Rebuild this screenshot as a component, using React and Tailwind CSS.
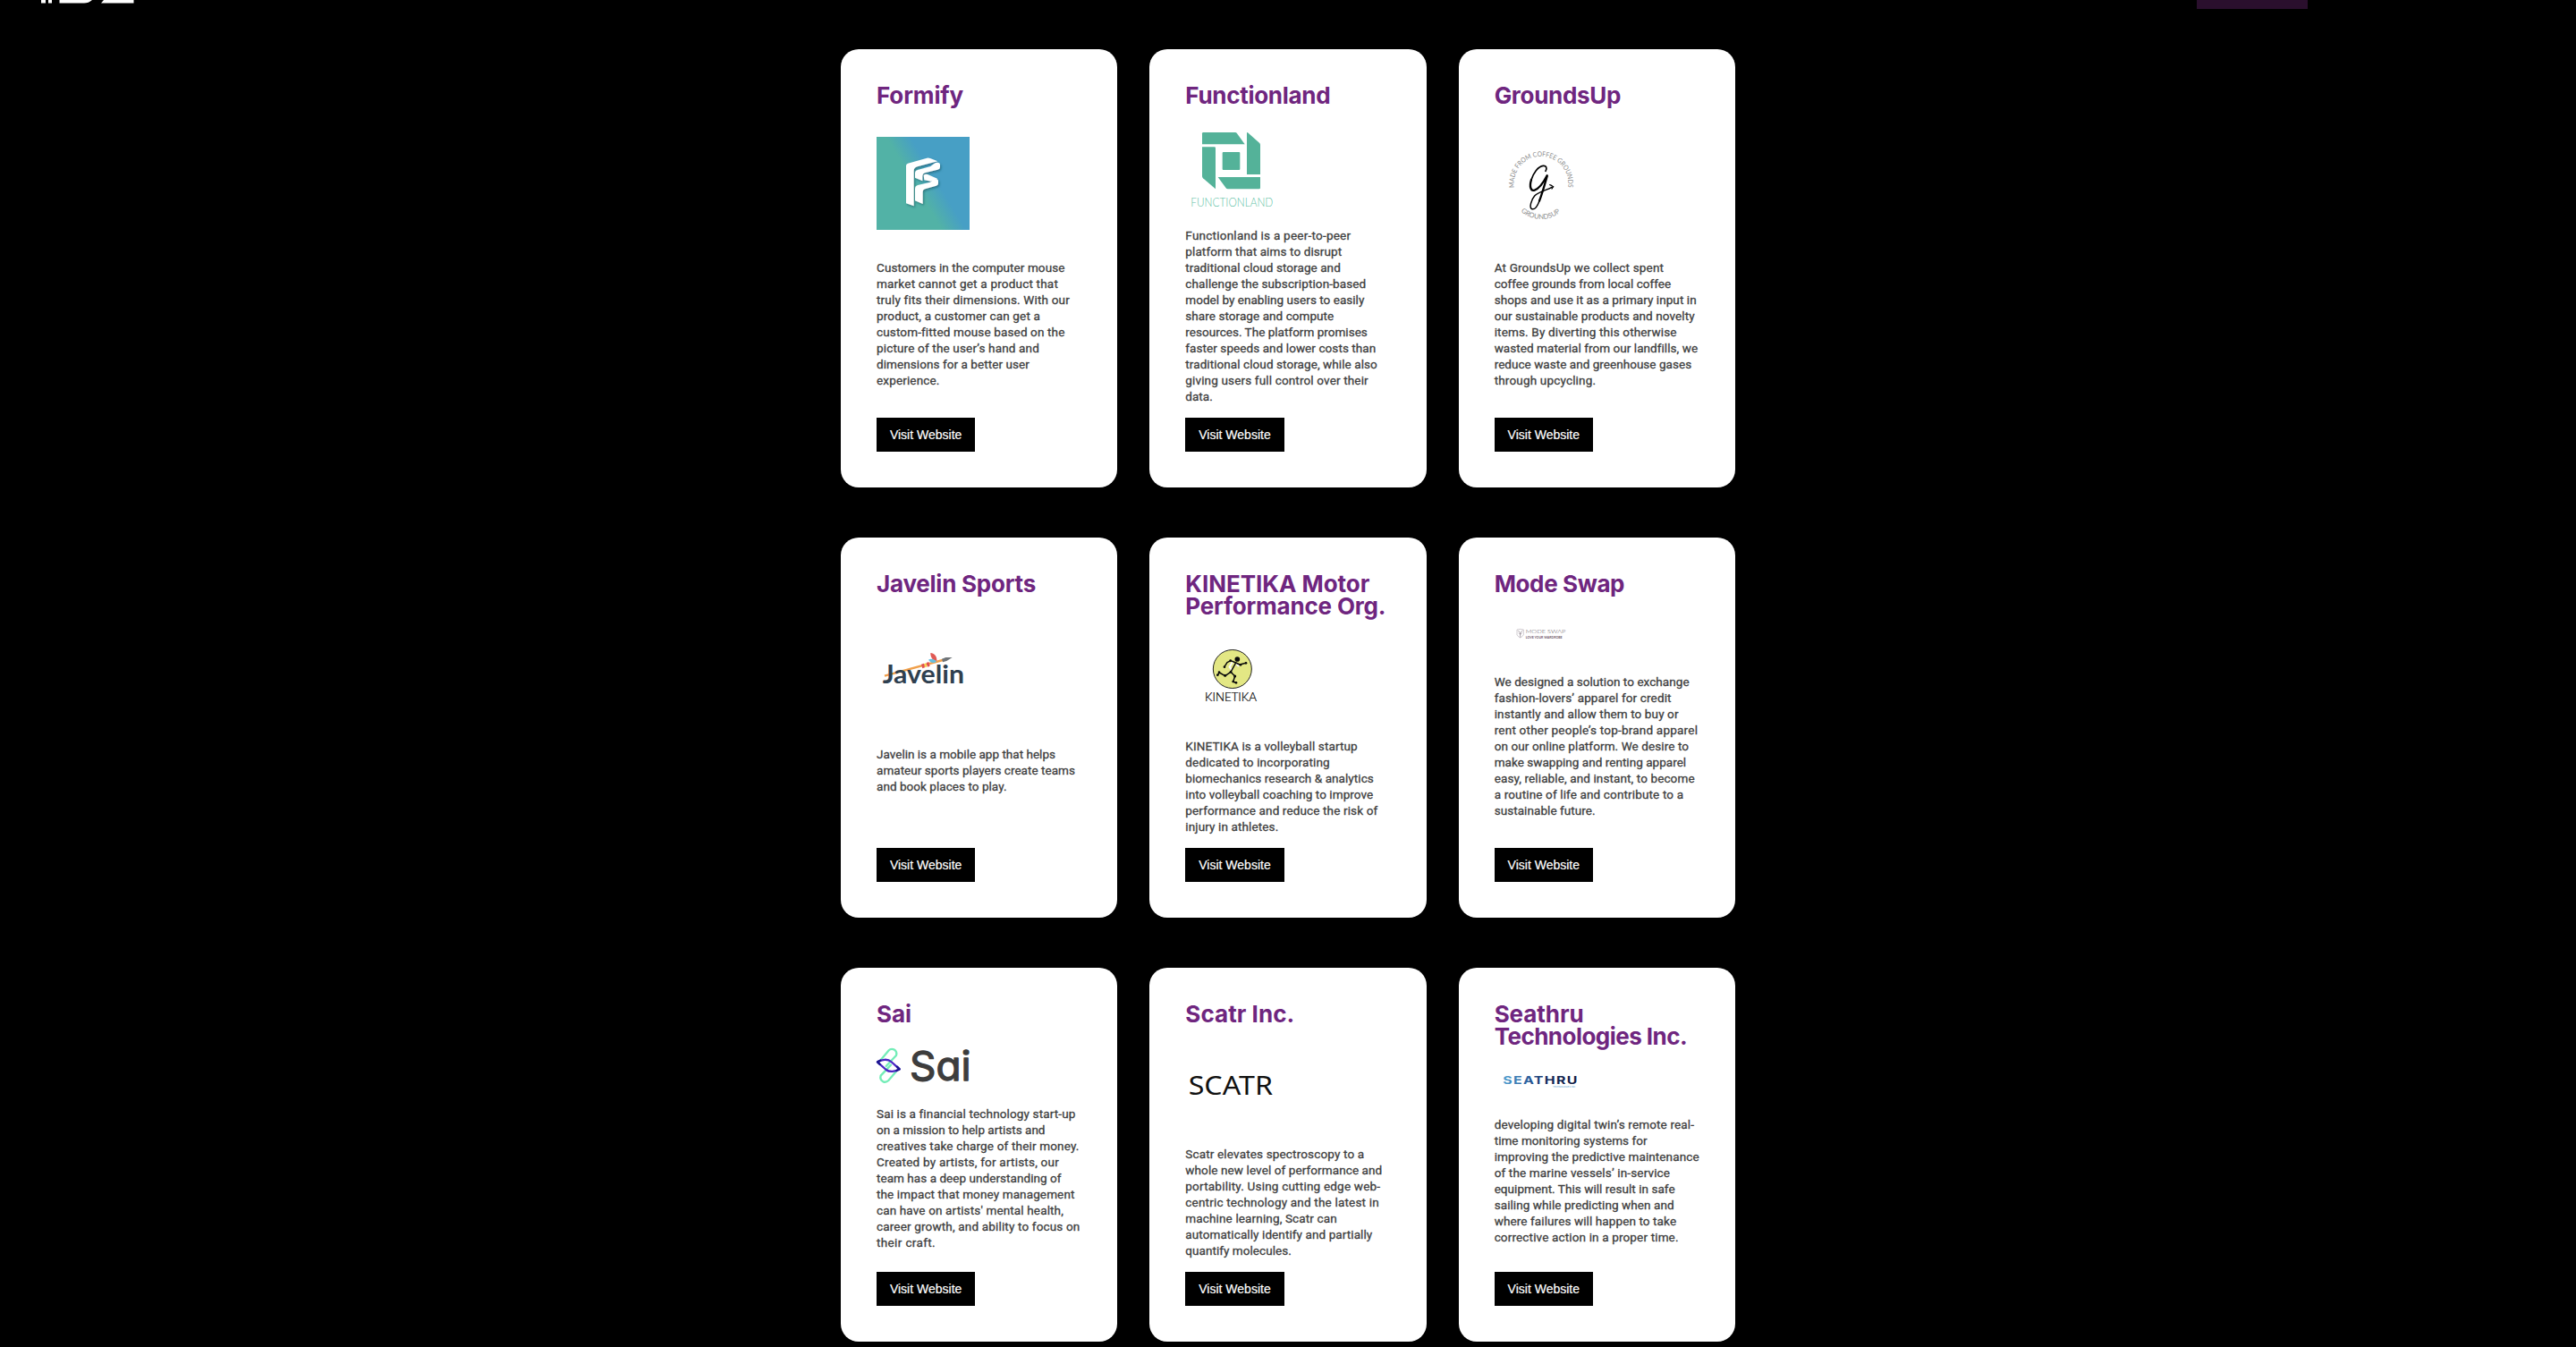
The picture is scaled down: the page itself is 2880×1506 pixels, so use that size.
import { useLayoutEffect, useRef } from "react";

/* One line of copy, tracked so that it fills the given width. */
function Line({ text, width }) {
  const ref = useRef(null);
  useLayoutEffect(() => {
    const el = ref.current;
    el.style.letterSpacing = "0px";
    const natural = el.getBoundingClientRect().width;
    el.style.letterSpacing = `${(width - natural) / text.length}px`;
  }, [text, width]);
  return (
    <span className="block">
      <span ref={ref} className="inline-block whitespace-nowrap">
        {text}
      </span>
    </span>
  );
}

function FormifyLogo() {
  return (
    <svg className="h-[171px] w-[104px]" viewBox="150 240 312 513">
      <defs>
        <linearGradient id="formify" gradientUnits="userSpaceOnUse" x1="286" y1="512" x2="346" y2="476">
          <stop offset="0" stopColor="#52b2a6" />
          <stop offset="1" stopColor="#479fc5" />
        </linearGradient>
        <filter id="formify-shadow" x="-20%" y="-20%" width="150%" height="150%">
          <feDropShadow dx="4" dy="5" stdDeviation="3" floodColor="#14505c" floodOpacity="0.55" />
        </filter>
      </defs>
      <rect x="150" y="339" width="312" height="312" fill="url(#formify)" />
      <g fill="#fff" filter="url(#formify-shadow)">
        <path d="M249 436q0-6 6-8l64-18q6-1 11 1l25 10-68 18q-12 3-12 14v118l-26-9z" />
        <path d="M279 459q1-7 9-9l43-12q9-7 17-12 15-3 15 7v7q0 7-8 9l-43 11q-8 2-8 10v17l-25-11z" />
        <path d="M308 467q6-4 13-2l33 14-22 9-22-4z" />
        <path d="M279 514q0-10 9-13l42-10q10-10 19-11 8 0 8 8v7q0 6-7 8l-37 11q-8 2-8 11v39l-26-11z" />
      </g>
    </svg>
  );
}

function FunctionlandLogo() {
  return (
    <svg className="h-[135px] w-[104px]" viewBox="150 240 312 405">
      <g fill="#54b299">
        <path d="M211 324h107q3 0 5 2l27 38H207v-36q0-4 4-4z" />
        <path d="M357 326q0-3 3-1l39 34q3 3 3 7v99h-45z" />
        <path d="M207 373h41q4 0 4 4v137l-42-36q-3-3-3-7z" />
        <path d="M260 474h142v36q0 4-4 4H293q-4 0-6-3z" />
        <rect x="275" y="390" width="59" height="60" rx="3" />
      </g>
      <text x="169" y="573" textLength="276" lengthAdjust="spacingAndGlyphs" fontSize="38" fontWeight="300" fontFamily="Lato, sans-serif" fill="#62bfa6">
        FUNCTIONLAND
      </text>
    </svg>
  );
}

function GroundsUpLogo() {
  return (
    <svg className="h-[171px] w-[104px] overflow-visible" viewBox="153 240 312 513">
      <defs>
        <path id="cup-top" d="M219 509A91 91 0 1 1 399 509" />
        <path id="cup-bottom" d="M241 589A102 102 0 0 0 377 589" />
      </defs>
      <g fill="#8d8d8d" fontFamily="Lato, sans-serif" fontSize="23">
        <text>
          <textPath href="#cup-top" textLength="312" lengthAdjust="spacingAndGlyphs">
            MADE FROM COFFEE GROUNDS
          </textPath>
        </text>
        <text>
          <textPath href="#cup-bottom" textLength="144" lengthAdjust="spacingAndGlyphs">
            GROUNDSUP
          </textPath>
        </text>
      </g>
      <g fill="none" stroke="#000" strokeLinecap="round" strokeLinejoin="round">
        <path strokeWidth="5" d="M324 454c6-11 2-19-8-18-18 2-33 25-40 47" />
        <path strokeWidth="7" d="M276 483c-7 23-2 39 11 35 15-5 29-24 42-49" />
        <path strokeWidth="7" d="M329 471c-8 28-17 60-26 83" />
        <path strokeWidth="4.5" d="M303 554c-7 19-16 30-25 27-10-5-2-31 9-44 13-14 40-19 58-29" />
        <path strokeWidth="4" d="M338 500c6 1 8 4 12 6-2 2-3 4-5 7" />
      </g>
    </svg>
  );
}

function JavelinLogo() {
  return (
    <svg className="h-[169px] w-[104px]" viewBox="150 228 312 507">
      <path d="M177 497L372 444" stroke="#f0a04b" strokeWidth="7" />
      <path d="M300 458l9-3 3 14-8 3zM317 453l8-3 4 14-8 3z" fill="#e0524f" />
      <path d="M310 456l6-2 3 13-6 2z" fill="#f7d154" />
      <path d="M331 420c12 1 22 10 21 27-12 0-22-12-21-27z" fill="#e05a55" />
      <path d="M324 443c9-5 20-2 27 6-9 6-19 5-27-6z" fill="#66bfe0" />
      <path d="M369 440l13-5 22 0-19 12-13 4z" fill="#6f7478" />
      <text x="170" y="522" textLength="274" lengthAdjust="spacingAndGlyphs" fontSize="88" fontWeight="700" fontFamily="Lato, sans-serif" fill="#2f4050">
        Javelin
      </text>
    </svg>
  );
}

function KinetikaLogo() {
  return (
    <svg className="h-[135px] w-[104px]" viewBox="150 303 312 405">
      <circle cx="308.5" cy="474" r="64.5" fill="#e3e784" stroke="#222" strokeWidth="3" />
      <path d="M309 451l-10 16 9 12M322 456l8 9" stroke="#fff" strokeWidth="6" fill="none" />
      <g fill="none" stroke="#0a0a0a" strokeWidth="4.5" strokeLinejoin="round" strokeLinecap="round">
        <path d="M282 466l9-14 12-6 17 7 13 6 21-5" />
        <path d="M320 453l-17 31-19 13-19-11-6 8" />
        <path d="M303 484l14 14-6 19 10 3" />
      </g>
      <g fill="#0a0a0a">
        <circle cx="325" cy="441" r="8.5" />
        <circle cx="282" cy="467" r="4" />
        <circle cx="302" cy="446" r="4" />
        <circle cx="336" cy="460" r="4" />
        <circle cx="354" cy="454" r="4" />
        <circle cx="303" cy="484" r="4" />
        <circle cx="284" cy="496" r="4.5" />
        <circle cx="264" cy="485" r="4" />
        <circle cx="259" cy="494" r="4" />
        <circle cx="317" cy="498" r="4.5" />
        <circle cx="311" cy="516" r="4" />
        <circle cx="321" cy="520" r="4" />
      </g>
      <text x="216" y="583" textLength="174" lengthAdjust="spacingAndGlyphs" fontSize="39" fontWeight="300" fontFamily="Lato, sans-serif" fill="#000" stroke="#000" strokeWidth="0.7">
        KINETIKA
      </text>
    </svg>
  );
}

function ModeSwapLogo() {
  return (
    <svg className="h-[88px] w-[104px]" viewBox="153 228 312 264">
      <g fill="none" stroke="#8b7f8a" strokeWidth="2">
        <path d="M228 342q11-4 22 0v17q-3 6-11 10-8-4-11-10z" opacity="0.6" />
        <path d="M239 368v-16M232 345l7 8 8-8M234 353l5 5 5-5" />
      </g>
      <text x="257" y="354" textLength="134" lengthAdjust="spacingAndGlyphs" fontSize="20" fontWeight="300" fontFamily="Lato, sans-serif" fill="#5c545c">
        MODE SWAP
      </text>
      <text x="257" y="371" textLength="123" lengthAdjust="spacingAndGlyphs" fontSize="11" fontWeight="700" fontFamily="Lato, sans-serif" fill="#6d5468">
        LOVE YOUR WARDROBE
      </text>
    </svg>
  );
}

function SaiLogo() {
  return (
    <svg className="h-[90px] w-[104px] overflow-visible" viewBox="150 231 312 270" aria-label="Sai">
      <g fill="none" strokeLinecap="round" strokeLinejoin="round">
        <path d="M165 344l25-30q8-8 18-4 12 7 8 20l-34 36" stroke="#74edb8" strokeWidth="7" />
        <path d="M215 385l-25 29q-8 8-18 4-12-7-8-20l34-36" stroke="#74edb8" strokeWidth="7" />
        <path d="M153 352c14-9 35-11 46-1l28 25c-14 9-34 11-45 2z" stroke="#4a26c4" strokeWidth="7" />
        <path d="M153 352l10-5M153 352l8 8M227 376l-10 5M227 376l-8-8" stroke="#1c1590" strokeWidth="7" />
      </g>
      <text
        x="261"
        y="414"
        textLength="206"
        lengthAdjust="spacingAndGlyphs"
        fontSize="134"
        fontFamily="Inter, sans-serif"
        fill="#3d3d3d"
        stroke="#3d3d3d"
        strokeWidth="4"
        strokeLinejoin="round"
      >
        Sɑi
      </text>
    </svg>
  );
}

function ScatrLogo() {
  return (
    <svg className="h-[135px] w-[104px]" viewBox="150 231 312 405">
      <text x="161" y="463" textLength="283" lengthAdjust="spacingAndGlyphs" fontSize="87" fontFamily="'Noto Sans', sans-serif" fill="#111">
        SCATR
      </text>
    </svg>
  );
}

function SeathruLogo() {
  return (
    <svg className="h-[77px] w-[104px]" viewBox="153 306 312 231">
      <defs>
        <linearGradient id="seathru" gradientUnits="userSpaceOnUse" x1="182" y1="0" x2="430" y2="0">
          <stop offset="0" stopColor="#4f9fd0" />
          <stop offset="0.35" stopColor="#2a5c9a" />
          <stop offset="0.6" stopColor="#152b5c" />
          <stop offset="1" stopColor="#101c42" />
        </linearGradient>
      </defs>
      <text x="181" y="426" textLength="253" lengthAdjust="spacingAndGlyphs" letterSpacing="3" fontSize="36" fontWeight="700" fontFamily="Inter, sans-serif" fill="url(#seathru)">
        SEATHRU
      </text>
      <text x="348" y="437" textLength="78" lengthAdjust="spacingAndGlyphs" fontSize="8" fontFamily="Inter, sans-serif" fill="#5ba3d0">
        TECHNOLOGIES INC.
      </text>
    </svg>
  );
}

const startups = [
  {
    logo: FormifyLogo,
    title: [["Formify", 97]],
    body: [
      ["Customers in the computer mouse", 210.5],
      ["market cannot get a product that", 203],
      ["truly fits their dimensions. With our", 215.5],
      ["product, a customer can get a", 183],
      ["custom-fitted mouse based on the", 210],
      ["picture of the user’s hand and", 182],
      ["dimensions for a better user", 171],
      ["experience.", 70.5],
    ],
  },
  {
    logo: FunctionlandLogo,
    title: [["Functionland", 162]],
    body: [
      ["Functionland is a peer-to-peer", 185],
      ["platform that aims to disrupt", 175],
      ["traditional cloud storage and", 173.5],
      ["challenge the subscription-based", 202],
      ["model by enabling users to easily", 200],
      ["share storage and compute", 166],
      ["resources. The platform promises", 203.5],
      ["faster speeds and lower costs than", 213],
      ["traditional cloud storage, while also", 214.5],
      ["giving users full control over their", 204.5],
      ["data.", 30.5],
    ],
  },
  {
    logo: GroundsUpLogo,
    title: [["GroundsUp", 141.5]],
    body: [
      ["At GroundsUp we collect spent", 189.5],
      ["coffee grounds from local coffee", 197.5],
      ["shops and use it as a primary input in", 226],
      ["our sustainable products and novelty", 224],
      ["items. By diverting this otherwise", 204],
      ["wasted material from our landfills, we", 227],
      ["reduce waste and greenhouse gases", 220.5],
      ["through upcycling.", 113.5],
    ],
  },
  {
    logo: JavelinLogo,
    title: [["Javelin Sports", 178]],
    body: [
      ["Javelin is a mobile app that helps", 200],
      ["amateur sports players create teams", 222],
      ["and book places to play.", 145.5],
    ],
  },
  {
    logo: KinetikaLogo,
    title: [
      ["KINETIKA Motor", 206],
      ["Performance Org.", 224],
    ],
    body: [
      ["KINETIKA is a volleyball startup", 192.5],
      ["dedicated to incorporating", 161.5],
      ["biomechanics research & analytics", 210.5],
      ["into volleyball coaching to improve", 210],
      ["performance and reduce the risk of", 215],
      ["injury in athletes.", 104],
    ],
  },
  {
    logo: ModeSwapLogo,
    title: [["Mode Swap", 145.5]],
    body: [
      ["We designed a solution to exchange", 218],
      ["fashion-lovers’ apparel for credit", 198],
      ["instantly and allow them to buy or", 206],
      ["rent other people’s top-brand apparel", 227.5],
      ["on our online platform. We desire to", 217.5],
      ["make swapping and renting apparel", 214.5],
      ["easy, reliable, and instant, to become", 224],
      ["a routine of life and contribute to a", 211.5],
      ["sustainable future.", 113],
    ],
  },
  {
    logo: SaiLogo,
    title: [["Sai", 39]],
    body: [
      ["Sai is a financial technology start-up", 222],
      ["on a mission to help artists and", 188.5],
      ["creatives take charge of their money.", 226.5],
      ["Created by artists, for artists, our", 204],
      ["team has a deep understanding of", 206.5],
      ["the impact that money management", 221.5],
      ["can have on artists' mental health,", 209],
      ["career growth, and ability to focus on", 227.5],
      ["their craft.", 66],
    ],
  },
  {
    logo: ScatrLogo,
    title: [["Scatr Inc.", 122]],
    body: [
      ["Scatr elevates spectroscopy to a", 200],
      ["whole new level of performance and", 220],
      ["portability. Using cutting edge web-", 218],
      ["centric technology and the latest in", 216.5],
      ["machine learning, Scatr can", 169.5],
      ["automatically identify and partially", 209],
      ["quantify molecules.", 118.5],
    ],
  },
  {
    logo: SeathruLogo,
    title: [
      ["Seathru", 100],
      ["Technologies Inc.", 215.5],
    ],
    body: [
      ["developing digital twin’s remote real-", 223.5],
      ["time monitoring systems for", 171],
      ["improving the predictive maintenance", 229],
      ["of the marine vessels’ in-service", 196.5],
      ["equipment. This will result in safe", 202],
      ["sailing while predicting when and", 201],
      ["where failures will happen to take", 203.5],
      ["corrective action in a proper time.", 206],
    ],
  },
];

function Card({ logo: Logo, title, body }) {
  return (
    <article className="flex flex-col items-start rounded-[20px] bg-white p-10">
      <h2 className="-mt-px mb-px font-['Inter'] text-[26px] leading-[25px] font-bold text-[#6f267f]">
        {title.map(([text, width]) => (
          <Line key={text} text={text} width={width} />
        ))}
      </h2>
      <div className="shrink-0">
        <Logo />
      </div>
      <p className="-mt-px font-['Roboto'] text-[13.5px] leading-[18px] text-[#404040] [-webkit-text-stroke:0.3px_#404040]">
        {body.map(([text, width]) => (
          <Line key={text} text={text} width={width} />
        ))}
      </p>
      <a className="mt-auto flex h-[38px] w-[110.3px] shrink-0 items-center justify-center bg-black pt-px font-['Liberation_Sans'] text-[14px] text-white [-webkit-text-stroke:0.2px_#fff]">
        <Line text="Visit Website" width={80.5} />
      </a>
    </article>
  );
}

export default function App() {
  return (
    <div className="h-[1506px] overflow-hidden bg-black">
      <header className="flex h-[55px] items-start justify-between pr-[300px] pl-[46px]">
        <svg className="h-1 w-[104px]" viewBox="0 0 104 4" fill="#fff">
          <path d="M0 0h5v3.600H0zM8 0h4v3.600H8zM20.500 0H57q-4 3.600-9 3.600H20.500zM70 0h33.500v3.600H67z" />
        </svg>
        <div className="h-[10px] w-[124px] bg-[#2a0f2d]" />
      </header>
      <main className="mx-auto grid w-[1000px] grid-cols-3 grid-rows-[490px_425px_418px] gap-x-9 gap-y-14">
        {startups.map((s) => (
          <Card key={s.title[0][0]} {...s} />
        ))}
      </main>
    </div>
  );
}
